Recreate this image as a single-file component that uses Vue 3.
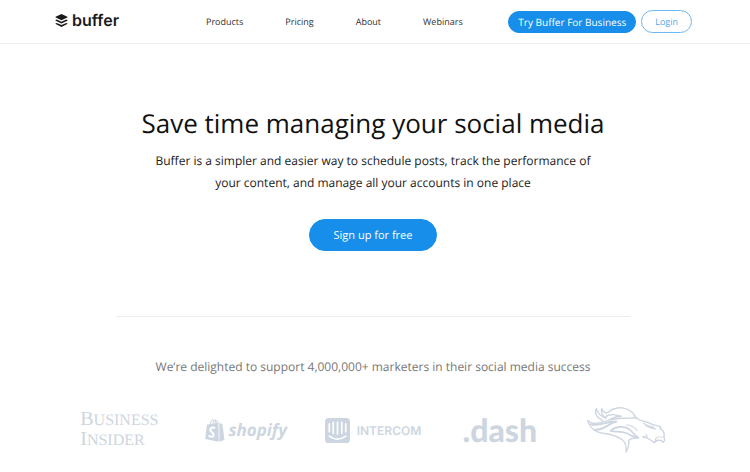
<template>
  <div class="page">
    <header class="site-header">
      <a class="brand" href="#" aria-label="Buffer home">
        <svg class="brand-icon" viewBox="0 0 36 38" fill="currentColor" aria-hidden="true">
          <path d="M18 0 35 8Q37 9 35 10L18 18 1 10Q-1 9 1 8Z" />
          <path d="M4 16 18 22.500 32 16 35 17.500Q37 18.500 35 19.500L18 28 1 19.500Q-1 18.500 1 17.500Z" />
          <path d="M4 26 18 32.500 32 26 35 27.500Q37 28.500 35 29.500L18 38 1 29.500Q-1 28.500 1 27.500Z" />
        </svg>
        <span>buffer</span>
      </a>
      <nav class="main-nav">
        <a v-for="item in navItems" :key="item" href="#">{{ item }}</a>
      </nav>
      <div class="header-actions">
        <button type="button" class="btn btn-business">Try Buffer For Business</button>
        <button type="button" class="btn btn-login">Login</button>
      </div>
    </header>

    <main class="content">
      <section class="hero">
        <h1>Save time managing your social media</h1>
        <p>Buffer is a simpler and easier way to schedule posts, track the performance of your content, and manage all your accounts in one place</p>
        <button type="button" class="btn btn-signup">Sign up for free</button>
      </section>

      <section class="customers">
        <p>We’re delighted to support 4,000,000+ marketers in their social media success</p>
        <div class="logos">
          <div class="logo logo-insider">
            <span>Business</span>
            <span>Insider</span>
          </div>
          <div class="logo logo-shopify">
            <svg viewBox="0 0 58 68" aria-hidden="true">
              <path fill="currentColor" d="M5 17 39 10 40 67 0 59Z" />
              <path fill="currentColor" d="M42 10 51 16 57 62 42 67Z" />
              <path fill="none" stroke="currentColor" stroke-width="3" d="M14 17C16 5 24-1 29 4C32 7 32 11 32 15M22 15C25 4 33-1 38 11" />
              <path fill="none" stroke="#fff" stroke-width="6" d="M29 27C20 22 13 29 16 35C18 39 26 41 25 48C24 54 16 54 10 49" />
            </svg>
            <span>shopify</span>
          </div>
          <div class="logo logo-intercom">
            <svg viewBox="0 0 76 76" aria-hidden="true">
              <rect width="76" height="76" rx="11" fill="currentColor" />
              <path fill="none" stroke="#fff" stroke-width="5" stroke-linecap="round" d="M13 18V42M25 13V47M38 12V49M51 13V47M63 18V42M13 55Q38 73 63 55" />
            </svg>
            <span>INTERCOM</span>
          </div>
          <div class="logo logo-dash">.dash</div>
          <div class="logo">
            <svg class="bronco" viewBox="0 0 236 136" fill="none" stroke="currentColor" stroke-width="4" stroke-linejoin="round" stroke-linecap="round" role="img" aria-label="Denver Broncos">
              <path d="M46 40C26 29 22 15 28 3C30 18 41 27 58 33" />
              <path d="M50 28C43 20 42 12 44 4C48 14 54 19 63 15C78 1 102-2 119 6C134 12 142 21 146 32" />
              <path d="M52 31C63 21 80 19 102 27C90 27 79 31 68 37" />
              <path d="M2 40C10 48 24 50 40 46C62 40 84 32 110 33C126 33 138 31 150 33L158 39C178 41 198 55 218 57L222 66C229 72 232 80 230 87L232 98 228 105 221 99 210 98 202 106 194 101C188 95 178 91 167 87" />
              <path d="M2 40C6 56 16 66 30 73C46 80 60 78 76 83C92 89 106 94 112 104C117 113 118 124 117 134C123 123 128 112 124 100" />
              <path stroke-width="6" d="M12 51C36 58 58 42 88 43C62 49 54 68 24 67" />
              <path stroke-width="5" d="M70 71C86 56 110 56 124 64C136 71 140 84 154 91C136 90 128 81 117 77C102 72 86 74 70 71Z" />
              <path d="M124 100C128 94 138 91 152 92" />
              <path stroke-width="3" d="M118 53C132 53 142 60 150 70M168 91 180 87 176 80M202 105 206 92 218 87M218 58 218 66M222 90 229 88" />
              <path fill="currentColor" stroke-width="2" d="M168 47 184 55 197 58 206 66 191 63 178 57Z" />
            </svg>
          </div>
        </div>
      </section>
    </main>
  </div>
</template>

<script setup>
const navItems = ['Products', 'Pricing', 'About', 'Webinars'];
</script>

<style>
body {
  margin: 0;
  background: #fff;
}
</style>

<style scoped>
.page {
  font-family: 'Open Sans', 'Noto Sans', sans-serif;
  color: #1a1a1a;
  text-rendering: geometricPrecision;
}

.site-header {
  display: flex;
  align-items: center;
  height: 43px;
  padding: 0 58px 0 55px;
  border-bottom: 1px solid #eef1f4;
}

a {
  color: inherit;
  text-decoration: none;
}

.brand {
  display: flex;
  align-items: center;
  gap: 4px;
  height: 40px;
  align-self: flex-start;
  font-family: Inter, 'Liberation Sans', sans-serif;
  font-size: 16px;
  font-weight: 600;
  line-height: 20px;
}

.brand-icon {
  width: 13px;
  height: 13px;
}

.main-nav {
  display: flex;
  gap: 42px;
  margin: 0 auto 0 87px;
  font-size: 9px;
  line-height: 16px;
  color: #333;
}

.header-actions {
  display: flex;
  align-items: center;
  gap: 5px;
}

.btn {
  box-sizing: border-box;
  border: 1px solid #168eea;
  border-radius: 16px;
  background: #168eea;
  color: #fff;
  font-family: inherit;
  text-rendering: inherit;
  white-space: nowrap;
  cursor: pointer;
}

.btn-business {
  height: 22px;
  padding: 0 9px;
  font-size: 10px;
}

.btn-login {
  height: 23px;
  padding: 0 13px;
  border-color: #6db8f2;
  background: #fff;
  color: #50a9ee;
  font-size: 9px;
}

.content {
  display: flex;
  flex-direction: column;
  align-items: center;
  padding: 59px 4px 16px 0;
}

.hero {
  display: flex;
  flex-direction: column;
  align-items: center;
  box-sizing: border-box;
  width: 69%;
  padding-bottom: 65px;
  border-bottom: 1px solid #ececec;
  text-align: center;
}

h1 {
  margin: 0;
  font-size: 26px;
  font-weight: 400;
  line-height: 40px;
  color: #111;
}

.hero p {
  max-width: 440px;
  margin: 7px 0 25px;
  font-size: 12px;
  line-height: 22px;
}

.btn-signup {
  height: 32px;
  padding: 0 24px;
  font-size: 11px;
}

.customers {
  width: 85%;
  padding-top: 40px;
}

.customers p {
  margin: 0;
  font-size: 12px;
  line-height: 20px;
  text-align: center;
  color: #777;
}

.logos {
  display: grid;
  grid-template-columns: repeat(5, 1fr);
  align-items: center;
  justify-items: center;
  margin-top: 30px;
  color: #cdd6e0;
}

.logo {
  display: flex;
  align-items: center;
}

.logo-insider {
  flex-direction: column;
  align-items: flex-start;
  font-family: 'Liberation Serif', serif;
  font-size: 16px;
  line-height: 18px;
  text-transform: uppercase;
}

.logo-insider span::first-letter {
  font-size: 20px;
  line-height: 18px;
}

.logo-shopify {
  gap: 3px;
  font-size: 17px;
  font-style: italic;
  font-weight: 700;
  line-height: 22px;
}

.logo-shopify svg {
  width: 20px;
  height: 23px;
}

.logo-intercom {
  gap: 7px;
  font-family: Inter, 'Liberation Sans', sans-serif;
  font-size: 12px;
  font-weight: 600;
}

.logo-intercom svg {
  width: 25px;
  height: 25px;
}

.logo-dash {
  font-family: Lato, sans-serif;
  font-size: 32px;
  font-weight: 900;
  line-height: 40px;
}

.bronco {
  width: 79px;
  height: 46px;
}
</style>
